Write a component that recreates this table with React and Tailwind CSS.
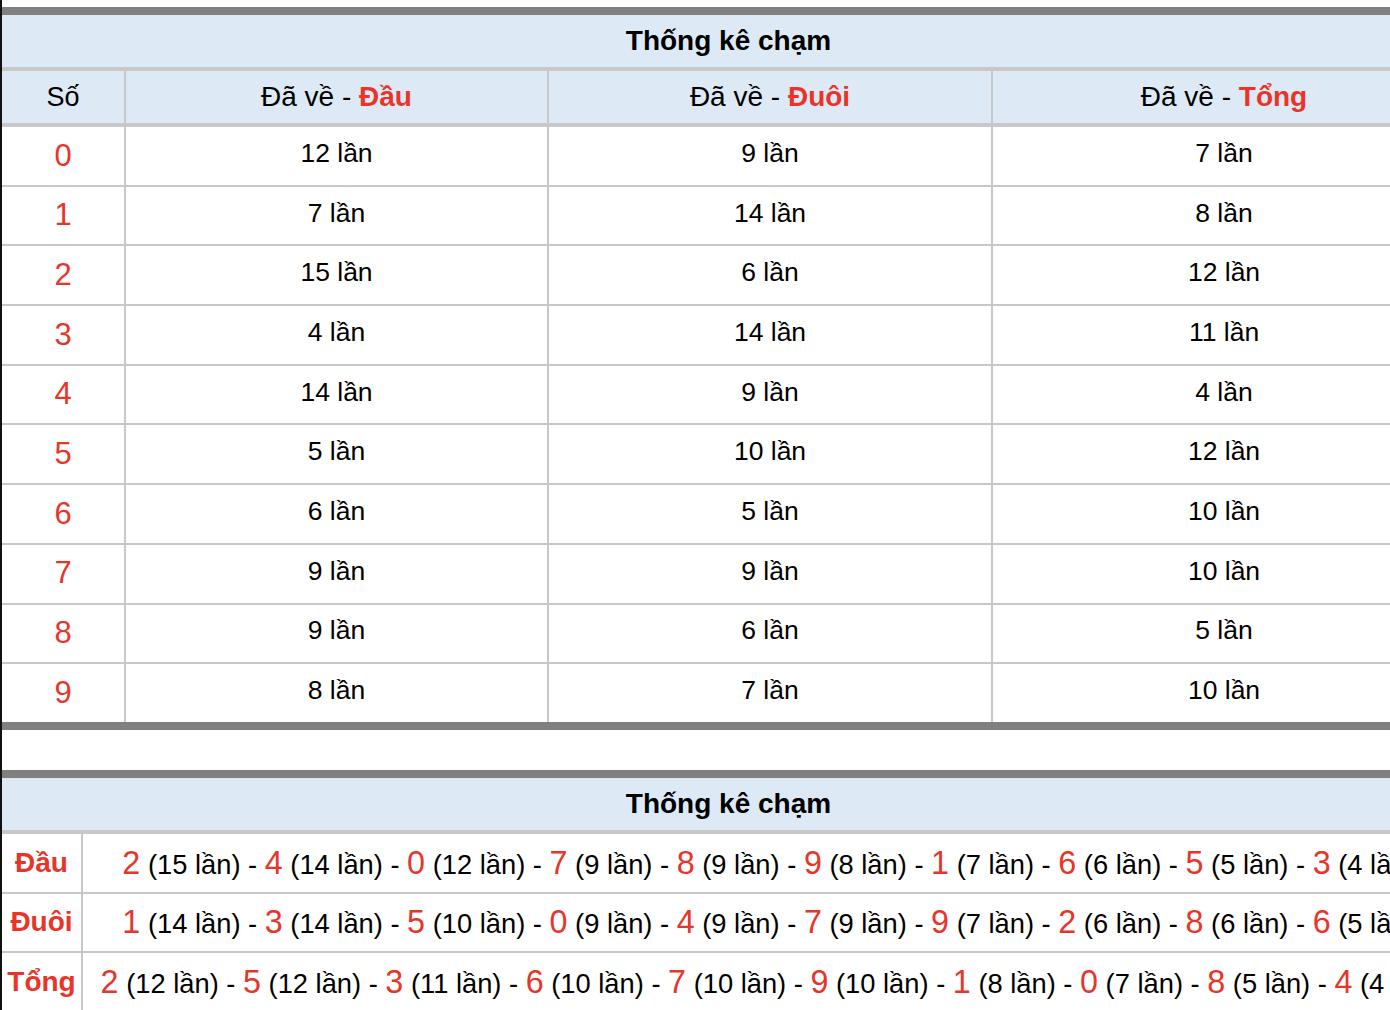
import React from 'react';

const counts = {
  dau: [12, 7, 15, 4, 14, 5, 6, 9, 9, 8],
  duoi: [9, 14, 6, 14, 9, 10, 5, 9, 6, 7],
  tong: [7, 8, 12, 11, 4, 12, 10, 10, 5, 10],
};

// digits ordered by count, highest first
const order = {
  dau: [2, 4, 0, 7, 8, 9, 1, 6, 5, 3],
  duoi: [1, 3, 5, 0, 4, 7, 9, 2, 8, 6],
  tong: [2, 5, 3, 6, 7, 9, 1, 0, 8, 4],
};

function HeadCell({ label, last }) {
  return (
    <div
      className={
        'flex items-center justify-center text-[28px] ' +
        (last ? '' : 'border-r-2 border-[#c8c8c8]')
      }
    >
      <span>
        Đã về - <b className="text-[#e8352a]">{label}</b>
      </span>
    </div>
  );
}

function TopTable() {
  return (
    <div className="mt-[7px] w-[1453px] border-t-8 border-b-8 border-[#808080]">
      <div className="flex h-[56px] items-center justify-center border-b-4 border-[#c8c8c8] bg-[#ddeaf6] text-[28px] font-bold">
        Thống kê chạm
      </div>
      <div className="grid h-[56px] grid-cols-[124px_423px_444px_462px] border-b-4 border-[#c8c8c8] bg-[#ddeaf6]">
        <div className="flex items-center justify-center border-r-2 border-[#c8c8c8] text-[27px]">Số</div>
        <HeadCell label="Đầu" />
        <HeadCell label="Đuôi" />
        <HeadCell label="Tổng" last />
      </div>
      {counts.dau.map((_, d) => (
        <div
          key={d}
          className={
            'grid grid-cols-[124px_423px_444px_462px] ' +
            (d < 9 ? 'h-[59.7px] border-b-2 border-[#c8c8c8]' : 'h-[57.7px]')
          }
        >
          <div className="flex items-center justify-center border-r-2 border-[#c8c8c8] text-[31px] text-[#e8352a]">
            {d}
          </div>
          <div className="flex items-center justify-center border-r-2 border-[#c8c8c8] pb-1 text-[26.5px]">
            {counts.dau[d]} lần
          </div>
          <div className="flex items-center justify-center border-r-2 border-[#c8c8c8] pb-1 text-[26.5px]">
            {counts.duoi[d]} lần
          </div>
          <div className="flex items-center justify-center pb-1 text-[26.5px]">{counts.tong[d]} lần</div>
        </div>
      ))}
    </div>
  );
}

function RankRow({ label, keyName, last }) {
  const list = order[keyName];
  return (
    <div
      className={
        'grid grid-cols-[81px_1372px] ' +
        (last ? 'h-[57.7px]' : 'h-[59.7px] border-b-2 border-[#c8c8c8]')
      }
    >
      <div className="flex items-center justify-center border-r-2 border-[#c8c8c8] text-[28px] font-bold text-[#e8352a]">
        {label}
      </div>
      <div className="flex items-center justify-center">
        <div className="whitespace-nowrap text-[27.3px]">
          {list.map((d, i) => (
            <React.Fragment key={d}>
              <span className="text-[32.3px] text-[#e8352a]">{d}</span>
              {` (${counts[keyName][d]} lần)`}
              {i < list.length - 1 ? ' - ' : ''}
            </React.Fragment>
          ))}
        </div>
      </div>
    </div>
  );
}

function BottomTable() {
  return (
    <div className="mt-10 w-[1453px] border-t-8 border-b-8 border-[#808080]">
      <div className="flex h-[56px] items-center justify-center border-b-4 border-[#c8c8c8] bg-[#ddeaf6] text-[28px] font-bold">
        Thống kê chạm
      </div>
      <RankRow label="Đầu" keyName="dau" />
      <RankRow label="Đuôi" keyName="duoi" />
      <RankRow label="Tổng" keyName="tong" last />
    </div>
  );
}

export default function App() {
  return (
    <div className="h-screen w-screen overflow-hidden border-l-2 border-[#111] bg-white font-['Liberation_Sans',Arial,sans-serif] leading-normal text-black">
      <TopTable />
      <BottomTable />
    </div>
  );
}
